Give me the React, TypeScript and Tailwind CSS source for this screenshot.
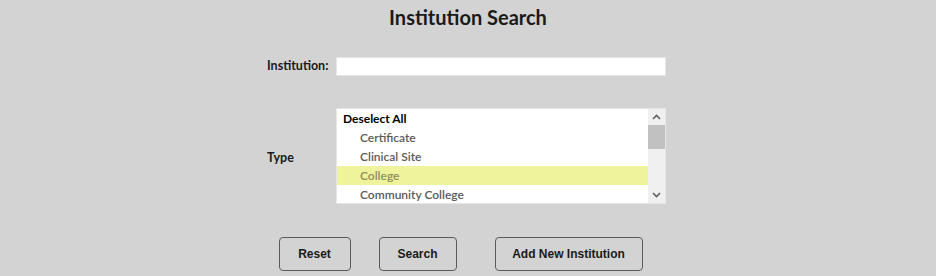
const types = ["Certificate", "Clinical Site", "College", "Community College"];

function ScrollArrow({ up }: { up?: boolean }) {
  return (
    <svg width="9" height="6" viewBox="0 0 9 6" className="text-[#606060]">
      <path d={up ? "M1 5L4.5 1.5L8 5" : "M1 1L4.5 4.5L8 1"} fill="none" stroke="currentColor" strokeWidth="1.6" />
    </svg>
  );
}

export default function App() {
  return (
    <div className="h-[276px] w-[936px] overflow-hidden bg-[#d3d3d3] font-['Lato','Liberation_Sans',sans-serif] text-[#1a1a1a]">
      <h1 className="pt-[5px] text-center text-[20px] font-bold leading-[24px]">Institution Search</h1>

      <div className="ml-[267px] mt-[28px] w-[399px]">
        <div className="flex items-center">
          <label className="w-[69px] text-[12.5px] font-bold">Institution:</label>
          <input className="h-[19px] w-[330px] border border-[#e6e6e6] bg-white outline-none" />
        </div>

        <div className="mt-[32px] flex items-center">
          <span className="w-[69px] pt-[4px] text-[12.5px] font-bold">Type</span>
          <div className="flex h-[96px] w-[330px] border border-[#e6e6e6] bg-white">
            <ul className="flex-1 text-[12px] leading-[19px]">
              <li className="pl-[6px] font-bold text-black">Deselect All</li>
              {types.map((t) => (
                <li
                  key={t}
                  className={`pl-[23px] font-semibold ${t === "College" ? "bg-[#eef39c] text-[#8e8e5c]" : "text-[#5a5a5a]"}`}
                >
                  {t}
                </li>
              ))}
            </ul>
            <div className="flex w-[17px] flex-col bg-[#f0f0f0]">
              <div className="flex h-[16px] items-center justify-center">
                <ScrollArrow up />
              </div>
              <div className="h-[24px] bg-[#c1c1c1]" />
              <div className="flex-1" />
              <div className="flex h-[16px] items-center justify-center">
                <ScrollArrow />
              </div>
            </div>
          </div>
        </div>
      </div>

      <div className="mt-[33px] flex justify-center gap-[28px] pr-[15px] font-['Liberation_Sans',sans-serif] text-[12px] font-bold">
        <button className="h-[34px] w-[72px] rounded-[4px] border border-[#5a5a5a]">Reset</button>
        <button className="h-[34px] w-[78px] rounded-[4px] border border-[#5a5a5a]">Search</button>
        <button className="ml-[10px] h-[34px] w-[148px] rounded-[4px] border border-[#5a5a5a]">Add New Institution</button>
      </div>
    </div>
  );
}
